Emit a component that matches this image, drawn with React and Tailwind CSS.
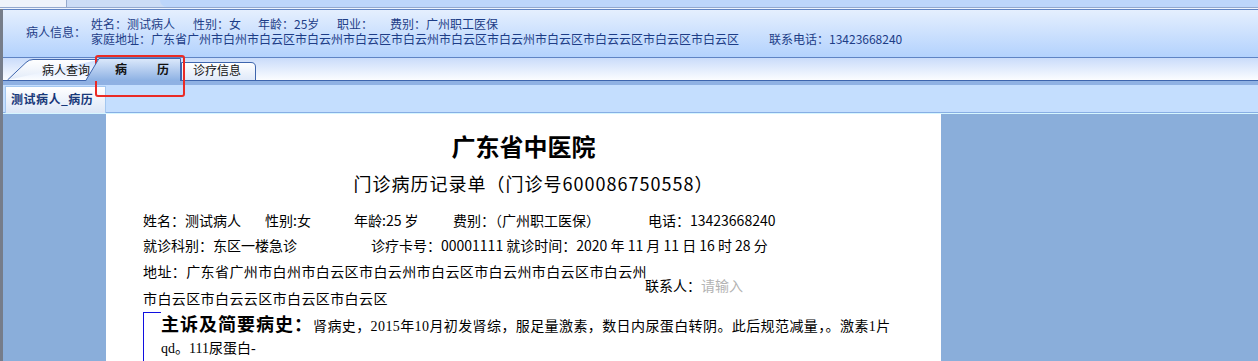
import React from 'react';

const cjk = "font-['Noto_Sans_CJK_SC',sans-serif]";
const serif = "font-['Liberation_Serif','Noto_Sans_CJK_SC',serif]";

function TabShape({ d, from, to, id }) {
  return (
    <svg className="absolute inset-0 h-full w-full" preserveAspectRatio="none">
      <defs>
        <linearGradient id={id} x1="0" y1="0" x2="0" y2="1">
          <stop offset="0" stopColor={from} />
          <stop offset="1" stopColor={to} />
        </linearGradient>
      </defs>
      <path d={d} fill={`url(#${id})`} stroke="#3e65ad" strokeWidth="1" />
    </svg>
  );
}

export default function App() {
  return (
    <div className={`relative w-[1258px] h-[361px] overflow-hidden bg-white ${cjk}`}>
      {/* top strip */}
      <div className="flex h-[8px] bg-[#cbdcf6] border-b border-[#93a8cd]">
        <div className="w-[67px] bg-[#eef3fb] border-r border-[#95a9cc]" />
        <div className="w-[93px]" />
        <div className="flex-1 rounded-bl-[8px] bg-[#bdd6fb]" />
      </div>
      <div className="h-px bg-[#eef4ff]" />

      <div className="border-l-[3px] border-[#767d8a]">
        {/* patient info */}
        <div className="flex h-[49px] border-y border-[#5f84c4] bg-gradient-to-b from-[#e5effe] to-[#b3d2fd] pt-[6px] text-[12px] leading-[15px] text-[#1d3d87]">
          <div className="ml-[23px] mt-[8px] w-[65px] self-start">病人信息：</div>
          <div className="flex flex-col whitespace-nowrap">
            <div className="flex">
              <span className="w-[102px]">姓名：测试病人</span>
              <span className="w-[65px]">性别：女</span>
              <span className="w-[79px]">年龄：25岁</span>
              <span className="w-[53px]">职业：</span>
              <span>费别：广州职工医保</span>
            </div>
            <div className="flex">
              <span className="w-[678px]">家庭地址：广东省广州市白州市白云区市白云州市白云区市白云州市白云区市白云州市白云区市白云云区市白云区市白云区</span>
              <span>联系电话：13423668240</span>
            </div>
          </div>
        </div>

        {/* tab strip */}
        <div className="flex h-[22px] items-end bg-gradient-to-b from-[#cadcfa] to-[#fbfdff] pl-[4px] text-[12px]">
          <div className="relative h-[22px] w-[93px]">
            <TabShape id="t1" from="#ffffff" to="#e2ebf9" d="M0.5,22 L19,4.5 Q22,1.5 26,1.5 L93,1.5" />
            <span className="relative block pl-[35px] pt-[5px] leading-[14px] text-[#111]">病人查询</span>
          </div>
          <div className="relative z-10 -ml-[15px] -mb-px h-[23px] w-[96px]">
            <TabShape id="t2" from="#dce9fb" to="#8cb0e3" d="M0.5,23 L14,0.5 L95.5,0.5 L95.5,23" />
            <span className="relative flex gap-[30px] pl-[30px] pt-[4px] font-bold leading-[14px] text-[#111]">
              <span>病</span>
              <span>历</span>
            </span>
          </div>
          <div className="relative h-[22px] w-[75px]">
            <TabShape id="t3" from="#ffffff" to="#dfe9f9" d="M0.5,22 L0.5,4.5 L70,4.5 Q74.5,4.5 74.5,9 L74.5,22" />
            <span className="relative block pl-[12px] pt-[5px] leading-[14px] text-[#111]">诊疗信息</span>
          </div>
        </div>
        <div className="h-px bg-[#3e65ad]" />
        <div className="h-[4px] bg-[#8fb1e3]" />

        {/* sub panel */}
        <div className="flex h-[28px] items-end border-b border-[#87aee4] bg-[#c4defe] pl-[2px]">
          <div className="-mb-px h-[27px] w-[101px] border border-b-0 border-[#a3c7f0] bg-gradient-to-b from-[#ffffff] to-[#dce7f7] pl-[5px] pt-[4px] text-[12px] font-bold leading-[16px] tracking-[0.5px] text-[#18397a]">
            测试病人_病历
          </div>
        </div>
        <div className="h-px bg-[#d6f6ff]" />

        {/* content */}
        <div className="flex h-[248px]">
          <div className="w-[103px] bg-[#8aaeda]" />
          <div className="w-[835px] bg-white text-black">
            <div className="pt-[16px] text-center text-[24px] font-bold leading-[32px]">广东省中医院</div>
            <div className="mt-[8px] pl-[20px] text-center text-[18px] leading-[26px] tracking-[1px]">
              门诊病历记录单（门诊号600086750558）
            </div>

            <div className="mt-[12px] pl-[37px] text-[14px] leading-[25px] whitespace-nowrap">
              <div className="flex">
                <span className="w-[122px]">姓名：测试病人</span>
                <span className="w-[89px]">性别:女</span>
                <span className="w-[99px]">年龄:25 岁</span>
                <span className="w-[195px]">费别：（广州职工医保）</span>
                <span>电话：13423668240</span>
              </div>
              <div className="flex">
                <span className="w-[228px]">就诊科别：东区一楼急诊</span>
                <span>诊疗卡号：00001111 就诊时间：2020 年 11 月 11 日 16 时 28 分</span>
              </div>
              <div className="flex items-center leading-[27px]">
                <div className="w-[502px] tracking-[0.4px]">
                  <div>地址：广东省广州市白州市白云区市白云州市白云区市白云州市白云区市白云州</div>
                  <div>市白云区市白云云区市白云区市白云区</div>
                </div>
                <div>
                  联系人：<span className="text-[#b3b3b3]">请输入</span>
                </div>
              </div>
            </div>

            <div className="relative ml-[37px] mt-[4px] border-l-[1.5px] border-[#1010e0] pl-[17px] whitespace-nowrap">
              <span className="absolute left-0 top-0 h-px w-[17px] bg-[#1010e0]" />
              <div className="-mt-[4px] flex items-baseline leading-[22px]">
                <span className="text-[18px] font-bold tracking-[1px]">主诉及简要病史：</span>
                <span className={`text-[14px] tracking-[0.4px] ${serif}`}>肾病史，2015年10月初发肾综，服足量激素，数日内尿蛋白转阴。此后规范减量，。激素1片</span>
              </div>
              <div className={`text-[14px] leading-[22px] ${serif}`}>qd。111尿蛋白-</div>
              <div className="h-[20px]" />
            </div>
          </div>
          <div className="flex-1 bg-[#8aaeda]" />
        </div>
      </div>

      {/* red annotation box */}
      <div className="absolute left-[95px] top-[55px] h-[42px] w-[90px] rounded-[3px] border-2 border-[#ea2b25]" />
    </div>
  );
}
